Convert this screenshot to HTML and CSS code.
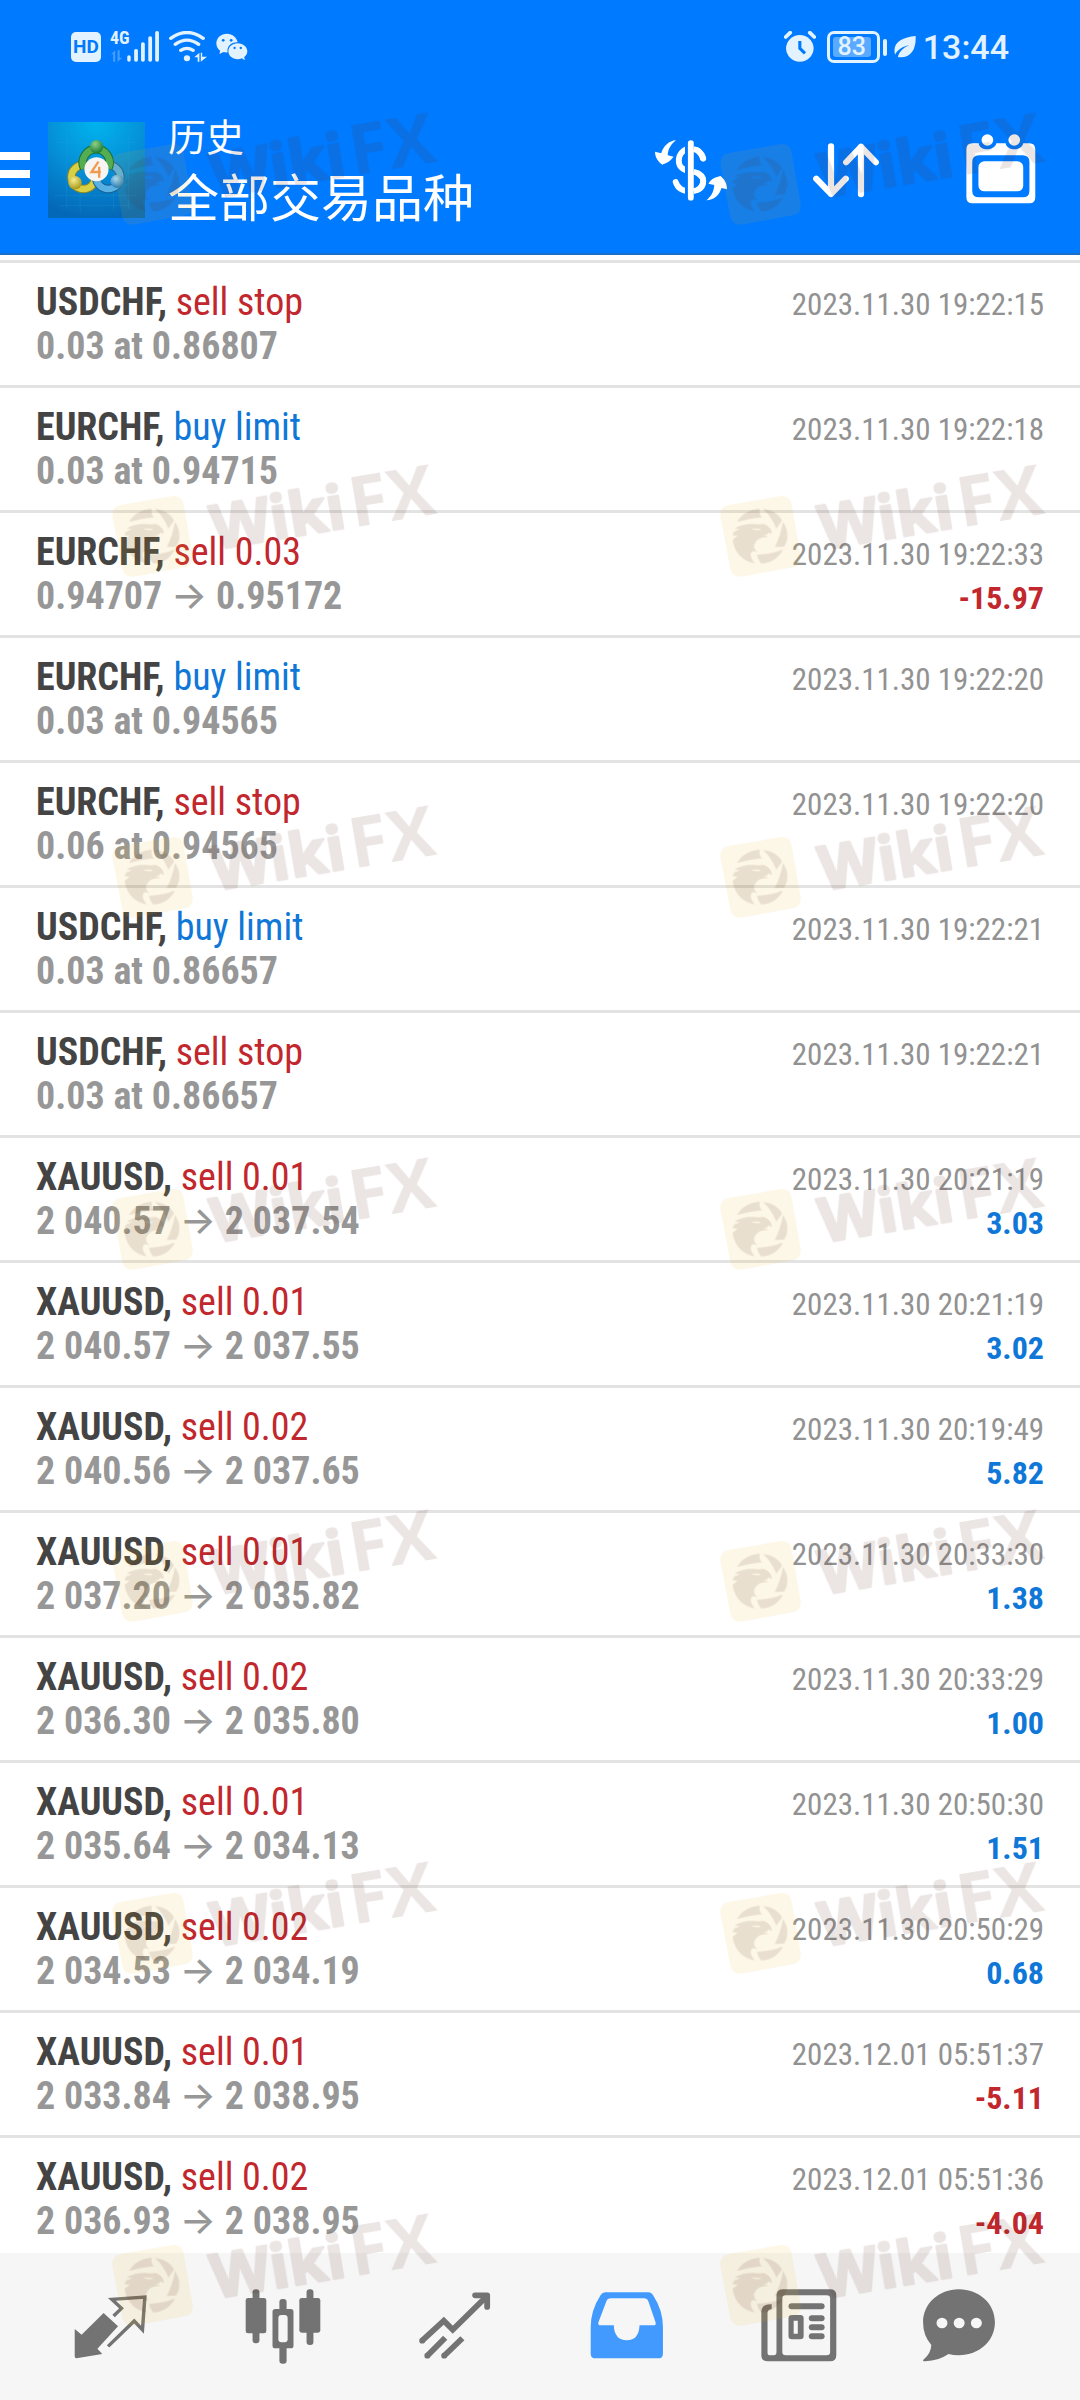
FILE: index.html
```html
<!DOCTYPE html>
<html lang="zh-CN">
<head>
<meta charset="utf-8">
<meta name="viewport" content="width=device-width, initial-scale=1">
<title>历史</title>
<link rel="stylesheet" href="styles.css">
</head>
<body>
<header class="top">
  <div class="status">
    <div class="status-group">
      <span class="hd">HD</span>
      <span class="signal">
        <span class="net">4G</span>
        <svg width="50" height="32" viewBox="325 93 145 96" preserveAspectRatio="none" fill="#e2f2ff">
          <rect x="375" y="166" width="10" height="19" rx="5"/><rect x="395" y="147" width="11" height="38" rx="5"/><rect x="415" y="127" width="11" height="58" rx="5"/><rect x="436" y="109" width="11" height="76" rx="5"/><rect x="456" y="93" width="11" height="92" rx="5"/>
          <path d="M328 163l12-12v34h-6v-22zM347 151h6v22h8l-14 12z" opacity=".3"/>
        </svg>
      </span>
      <svg width="38" height="32" viewBox="497 93 110 96" preserveAspectRatio="none" fill="none" stroke="#e2f2ff" stroke-width="10" stroke-linecap="round">
        <path d="M502 115Q549 80 596 115"/><path d="M515 133Q549 108 583 133"/><path d="M531 151Q549 139 567 151"/>
        <circle cx="549" cy="175" r="9" fill="#e2f2ff" stroke="none"/>
        <path d="M570 172l15-14v27h-5v-13zM589 158h4v12h14l-18 15z" fill="#e2f2ff" stroke="none"/>
      </svg>
      <svg width="32" height="32" viewBox="628 93 93 96" preserveAspectRatio="none" fill="#e2f2ff">
        <path d="M660 101C642 101 629 114 629 130C629 139 633 147 640 152L638 162L650 156Q656 158 662 157C658 140 672 126 691 127C688 112 676 101 660 101z"/>
        <path d="M691 130C675 130 664 141 664 154C664 167 675 178 691 178Q698 178 703 175L712 181L710 171C716 167 719 161 719 154C719 141 707 130 691 130z"/>
        <g fill="#007aff"><circle cx="649" cy="121" r="4"/><circle cx="672" cy="121" r="4"/><circle cx="682" cy="144" r="3.5"/><circle cx="700" cy="144" r="3.5"/></g>
      </svg>
    </div>
    <div class="status-group status-right">
      <svg width="32" height="32" viewBox="706 93 93 96" preserveAspectRatio="none" fill="#e2f2ff">
        <circle cx="752" cy="145" r="40"/>
        <path d="M711 111L724 98M794 111L781 98" stroke="#e2f2ff" stroke-width="11" stroke-linecap="round"/>
        <path d="M752 123V145L767 160" fill="none" stroke="#007aff" stroke-width="9"/>
      </svg>
      <span class="battery"><span class="charge">83</span></span>
      <svg class="leaf" width="22" height="32" viewBox="1030 93 63 96" preserveAspectRatio="none" fill="#e2f2ff">
        <path d="M1092 108C1094 150 1077 176 1041 171C1047 151 1059 143 1073 136C1056 139 1040 149 1033 164C1024 128 1052 112 1092 108z"/>
      </svg>
      <time class="clock">13:44</time>
    </div>
  </div>
  <div class="appbar">
    <button class="menu" aria-label="菜单"><i></i><i></i><i></i></button>
    <svg class="logo" width="97" height="96" viewBox="54 69 290 288" preserveAspectRatio="none">
      <defs>
        <radialGradient id="sky" cx=".5" cy="0" r="1"><stop offset="0" stop-color="#00b4ee"/><stop offset=".5" stop-color="#0590d8"/><stop offset="1" stop-color="#0468b8"/></radialGradient>
        <radialGradient id="green" cx=".4" cy=".3" r=".7"><stop offset="0" stop-color="#8fd08a"/><stop offset="1" stop-color="#1b7c34"/></radialGradient>
        <radialGradient id="gold" cx=".4" cy=".3" r=".7"><stop offset="0" stop-color="#f6ee8c"/><stop offset="1" stop-color="#a8981c"/></radialGradient>
        <radialGradient id="azure" cx=".4" cy=".3" r=".7"><stop offset="0" stop-color="#a6dbf5"/><stop offset="1" stop-color="#2178b8"/></radialGradient>
      </defs>
      <rect x="54" y="69" width="290" height="288" fill="url(#sky)"/>
      <path d="M110 90V330M150 100V340M250 90V335M295 110V330M75 130H320M75 290H320M90 320H300" stroke="#2fa6e0" stroke-width="2" opacity=".3"/>
      <g fill="none" stroke-width="20">
        <circle cx="160" cy="234" r="36" stroke="#86862a" stroke-width="26"/><circle cx="160" cy="234" r="36" stroke="#d9cf45"/>
        <circle cx="234" cy="234" r="36" stroke="#1a5f96" stroke-width="26"/><circle cx="234" cy="234" r="36" stroke="#58b1e2"/>
        <path d="M162 208A40 40 0 1 1 234 208" stroke="#1c6b30" stroke-width="26"/><path d="M162 208A40 40 0 1 1 234 208" stroke="#55ad52"/>
      </g>
      <circle cx="199" cy="143" r="20" fill="url(#green)"/><circle cx="135" cy="251" r="20" fill="url(#gold)"/><circle cx="261" cy="247" r="20" fill="url(#azure)"/>
      <circle cx="199" cy="211" r="36" fill="#f7f5f2"/>
      <path d="M205 188L184 219H212M207 203V236" fill="none" stroke="#f09a52" stroke-width="7"/>
    </svg>
    <div class="titles">
      <div class="title">历史</div>
      <h1 class="subtitle">全部交易品种</h1>
    </div>
    <div class="tools">
      <button aria-label="货币">
        <svg width="72" height="72" viewBox="331 404 209 216" preserveAspectRatio="none" fill="none" stroke="#fff" stroke-width="17" stroke-linecap="round">
          <path d="M471 478C465 458 452 448 434 448C414 448 400 464 400 484C400 504 412 512 434 516C458 520 471 528 471 546C471 566 456 576 434 576C412 576 397 568 391 548"/>
          <path d="M435 430V596" stroke="#007aff" stroke-width="34" stroke-linecap="butt"/>
          <path d="M443 449Q464 454 471 478M443 517Q471 524 471 546Q469 570 443 576" stroke-linecap="butt"/><circle cx="470" cy="477" r="8.500" fill="#fff" stroke="none"/>
          <path d="M435 431V595"/>
          <path d="M392 423C372 424 355 440 349 462L331 457C331 474 340 487 352 496C364 491 375 486 385 472L368 468C368 450 378 434 392 423z" fill="#fff" stroke="none"/>
          <path d="M480 603C502 602 518 588 524 566L540 570C540 552 533 540 521 530C508 533 494 538 486 553L503 557C502 578 493 592 480 603z" fill="#fff" stroke="none"/>
        </svg>
      </button>
      <button aria-label="排序">
        <svg width="72" height="72" viewBox="784 404 209 216" preserveAspectRatio="none" fill="none" stroke="#fff" stroke-width="18" stroke-linecap="round" stroke-linejoin="round">
          <path d="M845 441V584M802 538L845 584L888 538M932 585V442M889 489L932 442L975 489"/>
        </svg>
      </button>
      <button aria-label="日期">
        <svg width="72" height="72" viewBox="1233 404 209 216" preserveAspectRatio="none">
          <path fill="#fff" fill-rule="evenodd" d="M1254 432H1273C1275 456 1318 456 1324 432H1351C1355 456 1398 456 1402 432H1420Q1437 432 1437 450V594Q1437 612 1420 612H1254Q1237 612 1237 594V450Q1237 432 1254 432zM1274 468Q1254 468 1254 488V574Q1254 594 1274 594H1400Q1420 594 1420 574V488Q1420 468 1400 468z"/>
          <rect x="1272" y="486" width="130" height="90" rx="17" fill="#fff"/><circle cx="1298" cy="422" r="17" fill="#fff"/><circle cx="1376" cy="422" r="17" fill="#fff"/>
        </svg>
      </button>
    </div>
  </div>
</header>

<main class="history">
  <ul class="deals">
    <li class="deal"><span class="name"><b>USDCHF,</b> <span class="sell">sell stop</span></span><time>2023.11.30 19:22:15</time><span class="price">0.03 at 0.86807</span></li>
    <li class="deal"><span class="name"><b>EURCHF,</b> <span class="buy">buy limit</span></span><time>2023.11.30 19:22:18</time><span class="price">0.03 at 0.94715</span></li>
    <li class="deal"><span class="name"><b>EURCHF,</b> <span class="sell">sell 0.03</span></span><time>2023.11.30 19:22:33</time><span class="price">0.94707 <span class="to">→</span> 0.95172</span><span class="result sell">-15.97</span></li>
    <li class="deal"><span class="name"><b>EURCHF,</b> <span class="buy">buy limit</span></span><time>2023.11.30 19:22:20</time><span class="price">0.03 at 0.94565</span></li>
    <li class="deal"><span class="name"><b>EURCHF,</b> <span class="sell">sell stop</span></span><time>2023.11.30 19:22:20</time><span class="price">0.06 at 0.94565</span></li>
    <li class="deal"><span class="name"><b>USDCHF,</b> <span class="buy">buy limit</span></span><time>2023.11.30 19:22:21</time><span class="price">0.03 at 0.86657</span></li>
    <li class="deal"><span class="name"><b>USDCHF,</b> <span class="sell">sell stop</span></span><time>2023.11.30 19:22:21</time><span class="price">0.03 at 0.86657</span></li>
    <li class="deal"><span class="name"><b>XAUUSD,</b> <span class="sell">sell 0.01</span></span><time>2023.11.30 20:21:19</time><span class="price">2 040.57 <span class="to">→</span> 2 037.54</span><span class="result buy">3.03</span></li>
    <li class="deal"><span class="name"><b>XAUUSD,</b> <span class="sell">sell 0.01</span></span><time>2023.11.30 20:21:19</time><span class="price">2 040.57 <span class="to">→</span> 2 037.55</span><span class="result buy">3.02</span></li>
    <li class="deal"><span class="name"><b>XAUUSD,</b> <span class="sell">sell 0.02</span></span><time>2023.11.30 20:19:49</time><span class="price">2 040.56 <span class="to">→</span> 2 037.65</span><span class="result buy">5.82</span></li>
    <li class="deal"><span class="name"><b>XAUUSD,</b> <span class="sell">sell 0.01</span></span><time>2023.11.30 20:33:30</time><span class="price">2 037.20 <span class="to">→</span> 2 035.82</span><span class="result buy">1.38</span></li>
    <li class="deal"><span class="name"><b>XAUUSD,</b> <span class="sell">sell 0.02</span></span><time>2023.11.30 20:33:29</time><span class="price">2 036.30 <span class="to">→</span> 2 035.80</span><span class="result buy">1.00</span></li>
    <li class="deal"><span class="name"><b>XAUUSD,</b> <span class="sell">sell 0.01</span></span><time>2023.11.30 20:50:30</time><span class="price">2 035.64 <span class="to">→</span> 2 034.13</span><span class="result buy">1.51</span></li>
    <li class="deal"><span class="name"><b>XAUUSD,</b> <span class="sell">sell 0.02</span></span><time>2023.11.30 20:50:29</time><span class="price">2 034.53 <span class="to">→</span> 2 034.19</span><span class="result buy">0.68</span></li>
    <li class="deal"><span class="name"><b>XAUUSD,</b> <span class="sell">sell 0.01</span></span><time>2023.12.01 05:51:37</time><span class="price">2 033.84 <span class="to">→</span> 2 038.95</span><span class="result sell">-5.11</span></li>
    <li class="deal"><span class="name"><b>XAUUSD,</b> <span class="sell">sell 0.02</span></span><time>2023.12.01 05:51:36</time><span class="price">2 036.93 <span class="to">→</span> 2 038.95</span><span class="result sell">-4.04</span></li>
  </ul>
</main>

<nav class="tabs">
  <button aria-label="行情">
    <svg width="76" height="76" viewBox="210 326 221 228" preserveAspectRatio="none" fill="#737373">
      <path d="M215 446L235 463L299 398L341 438L281 505L295 521L220 534Q215 534 215 528z"/>
      <path d="M328 407L351 384L323 357L419 350L412 448L388 422L312 498" fill="none" stroke="#737373" stroke-width="10"/>
    </svg>
  </button>
  <button aria-label="图表">
    <svg width="76" height="76" viewBox="707 326 221 228" preserveAspectRatio="none" fill="#737373">
      <rect x="729" y="327" width="20" height="162" rx="9"/><rect x="709" y="353" width="60" height="106" rx="7"/>
      <rect x="886" y="327" width="20" height="167" rx="9"/><rect x="865" y="353" width="61" height="104" rx="7"/>
      <rect x="807" y="356" width="21" height="194" rx="9"/><rect x="787" y="386" width="61" height="118" rx="8"/><rect x="804" y="404" width="27" height="82" rx="9" fill="#f6f6f6"/>
    </svg>
  </button>
  <button aria-label="交易">
    <svg width="76" height="76" viewBox="1207 326 221 228" preserveAspectRatio="none" fill="none" stroke="#737373" stroke-width="17">
      <path d="M1222 481L1285 421L1311 448L1410 348M1237 526L1289 472M1286 526L1339 474"/>
      <path d="M1376 345H1411V380" stroke-linecap="round" stroke-linejoin="round"/>
      <path d="M1222 481h0M1237 526h0M1286 526h0" stroke-linecap="round"/>
    </svg>
  </button>
  <button aria-label="历史" aria-current="page">
    <svg width="76" height="76" viewBox="141 326 221 228" preserveAspectRatio="none">
      <path fill="#429aff" fill-rule="evenodd" d="M188 336H315Q322 336 327 344Q356 390 356 440V520Q356 534 342 534H160Q146 534 146 520V440Q146 390 175 344Q180 336 188 336zM204 354Q195 354 191 364L169 424Q165 435 176 435H213Q215 480 251 480Q286 480 288 435H328Q338 435 334 424L314 364Q310 354 301 354z"/>
    </svg>
  </button>
  <button aria-label="新闻">
    <svg width="76" height="76" viewBox="645 326 221 228" preserveAspectRatio="none" fill="#737373">
      <path fill-rule="evenodd" d="M707 327H846Q864 327 864 344V525Q864 543 846 543H664Q646 543 646 525V391Q648 371 676 372V386Q664 388 664 398V517Q664 525 672 525H682Q690 525 690 515V347Q690 327 707 327zM716 345Q707 345 707 354V515Q707 525 717 525H836Q846 525 846 515V355Q846 345 836 345z"/>
      <rect x="725" y="369" width="105" height="18" rx="9"/><path fill-rule="evenodd" d="M735 404H759Q769 404 769 414V467Q769 477 759 477H735Q725 477 725 467V414Q725 404 735 404zM740 421V460H752V421z"/>
      <rect x="784" y="405" width="46" height="18" rx="9"/><rect x="784" y="432" width="46" height="18" rx="9"/><rect x="784" y="459" width="46" height="18" rx="9"/>
    </svg>
  </button>
  <button aria-label="消息">
    <svg width="76" height="76" viewBox="1103 326 221 228" preserveAspectRatio="none">
      <path fill="#737373" d="M1213 327C1272 327 1318 370 1318 426C1318 482 1272 525 1213 525Q1197 525 1183 521Q1155 541 1116 543Q1106 543 1110 538Q1132 520 1133 494Q1109 466 1109 426C1109 370 1155 327 1213 327z"/>
      <g fill="#f6f6f6"><circle cx="1164" cy="428" r="16"/><circle cx="1214" cy="428" r="16"/><circle cx="1264" cy="428" r="16"/></g>
    </svg>
  </button>
</nav>

<div class="marks" aria-hidden="true">
  <svg class="defs" width="0" height="0">
    <defs>
      <symbol id="mark" viewBox="60 186 984 348">
        <path opacity=".1" fill="#f0b414" fill-rule="evenodd" d="M86 315L242 288Q268 285 274 309L302 468Q304 495 282 501L125 530Q98 532 91 507L61 348Q59 321 86 315z"/>
        <g opacity=".12" fill="#5a2d20">
          <path d="M111 366C125 342 148 328 180 326Q174 340 186 352Q150 354 111 366z"/>
          <path d="M189 327C217 330 237 344 246 361L229 386Q216 352 189 327z"/>
          <path d="M249 366C268 395 264 425 252 440L224 441Q241 410 249 366z"/>
          <path d="M249 448C235 476 207 491 183 490Q172 478 171 464Q215 462 249 448z"/>
          <path fill-rule="evenodd" d="M103 386Q130 368 176 373L192 372Q214 380 216 402L204 397Q205 406 189 404L206 411Q180 410 168 424Q154 442 172 456Q152 448 152 466Q154 480 166 490C130 486 102 458 98 420L113 406H98L101 396L121 387zM153 385Q168 394 182 389L180 386z"/>
          <g transform="translate(395 450) rotate(-9.500)">
            <text class="mark-a" x="-26" y="-4">Wiki</text>
            <text class="mark-b" x="394" y="-2">FX</text>
          </g>
        </g>
      </symbol>
    </defs>
  </svg>
  <svg class="mark"><use href="#mark"/></svg><svg class="mark"><use href="#mark"/></svg>
  <svg class="mark"><use href="#mark"/></svg><svg class="mark"><use href="#mark"/></svg>
  <svg class="mark"><use href="#mark"/></svg><svg class="mark"><use href="#mark"/></svg>
  <svg class="mark"><use href="#mark"/></svg><svg class="mark"><use href="#mark"/></svg>
  <svg class="mark"><use href="#mark"/></svg><svg class="mark"><use href="#mark"/></svg>
  <svg class="mark"><use href="#mark"/></svg><svg class="mark"><use href="#mark"/></svg>
  <svg class="mark"><use href="#mark"/></svg><svg class="mark"><use href="#mark"/></svg>
</div>
</body>
</html>
```

FILE: styles.css
```css
* { box-sizing: border-box; }

body {
  margin: 0;
  height: 100vh;
  display: flex;
  flex-direction: column;
  position: relative;
  overflow: hidden;
  background: #fff;
  font-family: "Roboto Condensed", Roboto, "Noto Sans CJK SC", sans-serif;
}

svg { display: block; }

button {
  padding: 0;
  border: 0;
  background: none;
}

/* header */
.top {
  flex: none;
  background: #007aff;
  border-bottom: 2px solid #1a6fc8;
}

.status {
  display: flex;
  justify-content: space-between;
  align-items: center;
  height: 86px;
  padding: 8px 71px 0;
  color: #e2f2ff;
}

.status-group {
  display: flex;
  align-items: center;
  gap: 9px;
}

.status-right { gap: 7px; }

.hd {
  width: 30px;
  height: 30px;
  border-radius: 5px;
  background: #e2f2ff;
  color: #007aff;
  font: 700 19px/30px Roboto, sans-serif;
  text-align: center;
}

.signal { position: relative; }

.net {
  position: absolute;
  left: 0;
  top: 0;
  font-size: 18px;
  line-height: 14px;
  font-weight: 700;
}

.battery {
  position: relative;
  width: 53px;
  height: 32px;
  margin: 0 7px 0 4px;
  padding: 3px;
  border: 3px solid #e2f2ff;
  border-radius: 7px;
}

.battery::after {
  content: "";
  position: absolute;
  right: -10px;
  top: 5px;
  width: 4px;
  height: 17px;
  border-radius: 2px;
  background: #e2f2ff;
}

.charge {
  display: block;
  width: 38px;
  height: 20px;
  border-radius: 3px;
  background: #5aaaff;
  font: 500 25px/20px Roboto, sans-serif;
  text-align: center;
}

.clock { font: 500 34px/40px Roboto, sans-serif; }

.appbar {
  display: flex;
  align-items: center;
  height: 167px;
  padding-right: 43px;
}

.menu {
  display: grid;
  gap: 10px;
  width: 30px;
  margin: 8px 18px 0 0;
}

.menu i {
  height: 8px;
  background: #fff;
}

.titles {
  flex: 1;
  margin-left: 23px;
  padding-bottom: 6px;
  color: #fff;
  font-family: "Noto Sans CJK SC", sans-serif;
}

.title {
  font-size: 38px;
  line-height: 56px;
}

.subtitle {
  margin: 0;
  font-size: 51px;
  font-weight: 400;
  line-height: 64px;
}

.tools {
  display: flex;
  gap: 83px;
}

/* deal list */
.history {
  flex: 1;
  min-height: 0;
  padding-top: 5px;
  overflow: hidden;
}

.deals {
  margin: 0;
  padding: 0;
  list-style: none;
}

.deal {
  display: grid;
  grid-template-columns: 1fr auto;
  grid-template-rows: 44px 44px;
  align-items: baseline;
  height: 125px;
  padding: 17px 36px 0;
  border-top: 3px solid #e3e3e3;
  font-size: 38px;
  line-height: 44px;
}

.name { color: #444; }

.deal time {
  color: #929292;
  font-size: 31px;
  text-align: right;
}

.price {
  color: #979797;
  font-weight: 700;
}

.to {
  font-family: Inter, sans-serif;
  font-weight: 500;
  line-height: 1;
}

.result {
  font-size: 32px;
  font-weight: 700;
  text-align: right;
}

.sell { color: #c1272d; }
.buy { color: #0f77d8; }

/* bottom tabs */
.tabs {
  flex: none;
  display: grid;
  grid-template-columns: repeat(5, 1fr) 148px;
  justify-items: center;
  align-items: center;
  height: 147px;
  padding: 0 47px 0 25px;
  background: #f6f6f6;
}

/* watermark layer */
.marks {
  position: absolute;
  inset: 0;
  display: grid;
  grid-template-columns: auto auto;
  grid-template-rows: 352px 341px repeat(5, 352px);
  justify-content: space-between;
  padding: 110px 32px 0 112px;
  overflow: hidden;
  pointer-events: none;
}

.defs { position: absolute; }

.mark {
  width: 328px;
  height: 116px;
}

.mark-a,
.mark-b {
  font-family: "Open Sans", sans-serif;
  font-weight: 700;
}

.mark-a {
  font-size: 184px;
  stroke: #5a2d20;
  stroke-width: 8px;
  stroke-linejoin: round;
}

.mark-b { font-size: 212px; }
```
